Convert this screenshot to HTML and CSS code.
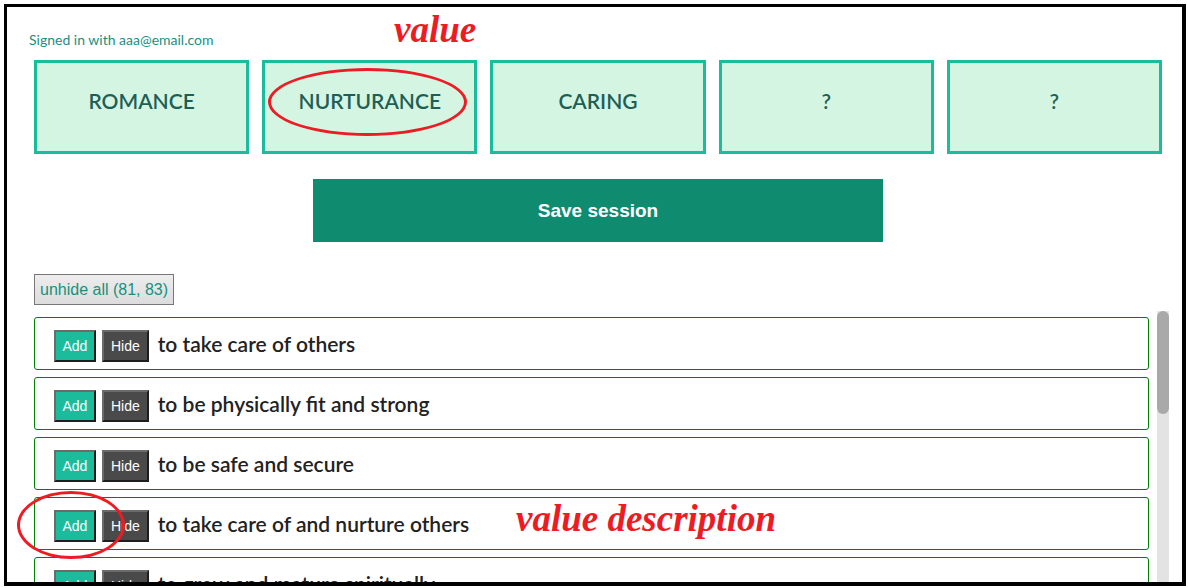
FILE: index.html
```html
<!DOCTYPE html>
<html lang="en">
<head>
  <meta charset="UTF-8">
  <title>Values session</title>
  <link rel="stylesheet" href="styles.css">
</head>
<body>
  <div class="frame">
    <div class="page">
      <div class="signed">Signed in with aaa@email.com</div>

      <div class="values">
        <div class="value-card">ROMANCE</div>
        <div class="value-card">NURTURANCE</div>
        <div class="value-card">CARING</div>
        <div class="value-card">?</div>
        <div class="value-card">?</div>
      </div>

      <div class="save-wrap">
        <button class="save">Save session</button>
      </div>

      <button class="unhide">unhide all (81, 83)</button>

      <div class="list">
        <div class="rows">
          <div class="row"><button class="btn add">Add</button><button class="btn hide">Hide</button><span class="desc">to take care of others</span></div>
          <div class="row"><button class="btn add">Add</button><button class="btn hide">Hide</button><span class="desc">to be physically fit and strong</span></div>
          <div class="row"><button class="btn add">Add</button><button class="btn hide">Hide</button><span class="desc">to be safe and secure</span></div>
          <div class="row"><button class="btn add">Add</button><button class="btn hide">Hide</button><span class="desc">to take care of and nurture others</span></div>
          <div class="row"><button class="btn add">Add</button><button class="btn hide">Hide</button><span class="desc">to grow and mature spiritually</span></div>
        </div>
        <div class="scrollbar"><div class="thumb"></div></div>
      </div>
    </div>

    <!-- annotations drawn over the screenshot -->
    <div class="note note-value">value</div>
    <div class="note note-desc">value description</div>
    <div class="circle circle-value"></div>
    <div class="circle circle-add"></div>
  </div>
</body>
</html>
```

FILE: styles.css
```css
html, body {
  margin: 0;
  padding: 0;
  background: #fff;
  overflow: hidden;
}
.frame {
  position: relative;
  box-sizing: border-box;
  width: 1182px;
  height: 582px;
  margin: 4px 0 0 4px;
  border-style: solid;
  border-color: #000;
  border-width: 3px 4px 4px 3px;
  overflow: hidden;
}
.page {
  padding: 25px 13px 0 27px;
  font-family: Lato, "Noto Sans", sans-serif;
}
.signed {
  margin-left: -5px;
  font-size: 14px;
  line-height: 16px;
  color: #1a8f7f;
}
.values {
  display: grid;
  grid-template-columns: repeat(5, 1fr);
  gap: 13px;
  width: 1128px;
  margin-top: 12px;
}
.value-card {
  box-sizing: border-box;
  height: 94px;
  padding-bottom: 14px;
  display: flex;
  align-items: center;
  justify-content: center;
  background: #d5f5e3;
  border: 3px solid #1abc9c;
  font-size: 21px;
  font-weight: 600;
  color: #1d5f56;
}
.save-wrap {
  width: 1128px;
  display: flex;
  justify-content: center;
  margin-top: 25px;
}
.save {
  width: 570px;
  height: 63px;
  border: none;
  background: #0f8b6f;
  color: #fff;
  font-family: "Liberation Sans", Arial, sans-serif;
  font-weight: bold;
  font-size: 19px;
}
.unhide {
  display: block;
  box-sizing: border-box;
  height: 31px;
  margin-top: 32px;
  padding: 0 5px;
  border: 1px solid #777;
  background: linear-gradient(#ededed, #dcdcdc);
  color: #16917f;
  font-family: "Liberation Sans", Arial, sans-serif;
  font-size: 16px;
}
.list {
  display: flex;
  height: 271px;
  margin-top: 6px;
  overflow: hidden;
}
.rows {
  flex: 1;
  padding: 6px 8px 0 0;
}
.scrollbar {
  width: 12px;
  background: #e3e3e3;
}
.thumb {
  height: 103px;
  border-radius: 6px;
  background: #a9a9a9;
}
.row {
  display: flex;
  align-items: center;
  box-sizing: border-box;
  height: 53px;
  padding: 4px 19px 0;
  margin-bottom: 7px;
  border: 1px solid #008000;
  border-radius: 3px;
}
.btn {
  box-sizing: border-box;
  height: 32px;
  padding: 0 7px;
  margin-right: 6px;
  border-style: solid;
  border-width: 2px;
  border-color: #6b6b6b #1e1e1e #1e1e1e #6b6b6b;
  color: #fff;
  font-family: "Liberation Sans", Arial, sans-serif;
  font-size: 14px;
}
.add {
  padding: 0 6.5px;
  background: #1abc9c;
}
.hide {
  background: #4a4a4a;
}
.desc {
  margin-left: 3px;
  padding-bottom: 5px;
  font-size: 21px;
  font-weight: 600;
  color: #222;
}
.note {
  position: absolute;
  font-family: "Liberation Serif", "Times New Roman", serif;
  font-style: italic;
  font-weight: bold;
  font-size: 37px;
  line-height: 37px;
  color: #ed1c24;
}
.note-value {
  left: 387px;
  top: 4px;
}
.note-desc {
  left: 509px;
  top: 493px;
}
.circle {
  position: absolute;
  box-sizing: border-box;
  border: 3px solid #ed1c24;
  border-radius: 50%;
}
.circle-value {
  left: 261px;
  top: 61px;
  width: 199px;
  height: 68px;
}
.circle-add {
  left: 10px;
  top: 484px;
  width: 108px;
  height: 68px;
}
```
